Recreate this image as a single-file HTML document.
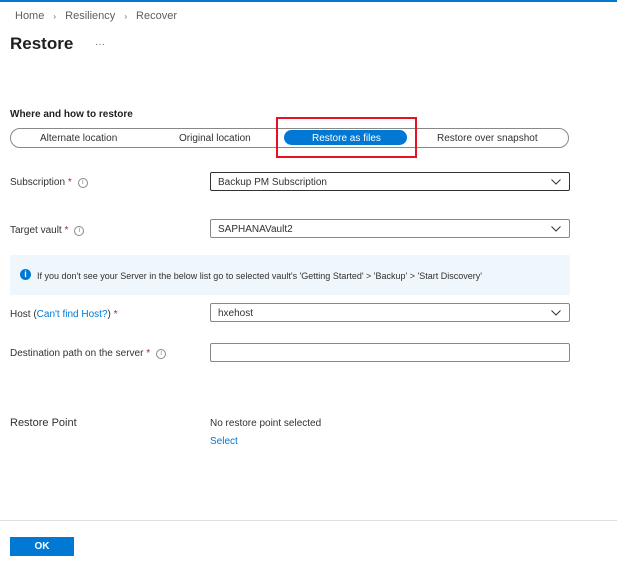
<!DOCTYPE html>
<html><head><style>
body{margin:0;width:617px;height:567px;background:#fff;font-family:"Liberation Sans",sans-serif;color:#323130;position:relative;overflow:hidden}
.a{position:absolute;white-space:nowrap}
.s{font-size:10px}
.dd{position:absolute;left:210px;height:17px;border:1px solid #8a8886;border-radius:2px;font-size:10px;line-height:19px;padding-left:7px;box-sizing:content-box;width:351px}
.dd svg{position:absolute;right:8px;top:6px}
.req{color:#a4262c}
.i{display:inline-block;width:8px;height:8px;border:1px solid #8a8886;border-radius:50%;font-size:7px;line-height:8px;text-align:center;color:#8a8886;vertical-align:1px;margin-left:6px}
</style></head><body>
<div class="a" style="left:0;top:0;width:617px;height:2px;background:#0078d4"></div>
<div class="a s" style="left:15px;top:10px;font-size:11px;color:#605e5c">Home <span style="margin:0 6px;font-size:8px">›</span> Resiliency <span style="margin:0 6px;font-size:8px">›</span> Recover</div>
<div class="a" style="left:10px;top:34px;font-size:17px;font-weight:bold;color:#201f1e">Restore</div>
<div class="a" style="left:95px;top:39px;font-size:10px;color:#605e5c">···</div>
<div class="a" style="left:10px;top:109px;font-size:10px;font-weight:bold;color:#201f1e">Where and how to restore</div>
<div class="a" style="left:10px;top:128px;width:557px;height:18px;border:1px solid #8a8886;border-radius:10px"></div>
<div class="a" style="left:284px;top:130px;width:123px;height:15px;background:#0078d4;border-radius:8px"></div>
<div class="a s" style="left:40px;top:133px">Alternate location</div>
<div class="a s" style="left:179px;top:133px">Original location</div>
<div class="a s" style="left:312px;top:133px;color:#fff">Restore as files</div>
<div class="a s" style="left:437px;top:133px">Restore over snapshot</div>
<div class="a" style="left:276px;top:117px;width:137px;height:37px;border:2px solid #e81123"></div>

<div class="a s" style="left:10px;top:177px">Subscription <span class="req">*</span><span class="i">i</span></div>
<div class="dd" style="top:172px;border-color:#323130">Backup PM Subscription<svg width="10" height="6"><path d="M0.5 0.5L5 5L9.5 0.5" fill="none" stroke="#323130"/></svg></div>
<div class="a s" style="left:10px;top:225px">Target vault <span class="req">*</span><span class="i">i</span></div>
<div class="dd" style="top:219px">SAPHANAVault2<svg width="10" height="6"><path d="M0.5 0.5L5 5L9.5 0.5" fill="none" stroke="#323130"/></svg></div>
<div class="a" style="left:10px;top:255px;width:560px;height:40px;background:#eff6fc"></div>
<div class="a" style="left:20px;top:269px;width:11px;height:11px;border-radius:50%;background:#0078d4;color:#fff;font-size:9px;font-weight:bold;line-height:11px;text-align:center">i</div>
<div class="a" style="left:37px;top:271px;font-size:9px">If you don't see your Server in the below list go to selected vault's 'Getting Started' &gt; 'Backup' &gt; 'Start Discovery'</div>
<div class="a s" style="left:10px;top:309px">Host (<span style="color:#0078d4">Can't find Host?</span>) <span class="req">*</span></div>
<div class="dd" style="top:303px">hxehost<svg width="10" height="6"><path d="M0.5 0.5L5 5L9.5 0.5" fill="none" stroke="#323130"/></svg></div>
<div class="a s" style="left:10px;top:348px">Destination path on the server <span class="req">*</span><span class="i">i</span></div>
<div class="dd" style="top:343px"></div>
<div class="a" style="left:10px;top:417px;font-size:11px">Restore Point</div>
<div class="a s" style="left:210px;top:418px">No restore point selected</div>
<div class="a s" style="left:210px;top:436px;color:#0078d4">Select</div>
<div class="a" style="left:0;top:520px;width:617px;height:1px;background:#e1dfdd"></div>
<div class="a" style="left:10px;top:537px;width:64px;height:19px;background:#0078d4;color:#fff;font-size:10px;font-weight:bold;text-align:center;line-height:19px">OK</div>
</body></html>
